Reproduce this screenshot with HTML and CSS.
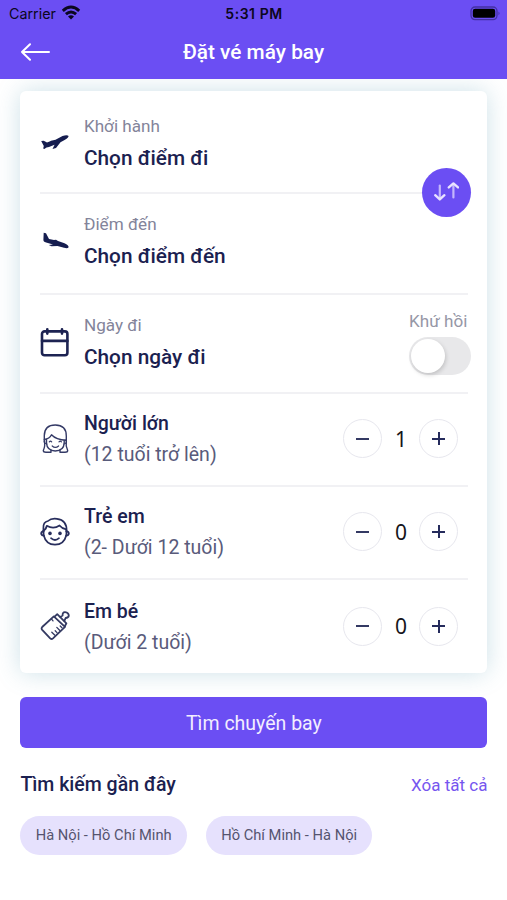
FILE: index.html
```html
<!DOCTYPE html>
<html lang="vi">
<head>
<meta charset="utf-8">
<title>Đặt vé máy bay</title>
<link rel="stylesheet" href="styles.css">
</head>
<body>
<header class="header">
  <div class="status">
    <div class="carrier"><span>Carrier</span>
      <svg width="20" height="15" viewBox="0 0 20 15" fill="none" stroke="#0b0720" stroke-width="2.9"><path d="M1.8 5.8Q10 -1.6 18.2 5.8"/><path d="M4.9 9.2Q10 4.6 15.1 9.2"/><path d="M7 11.6Q10 9 13 11.6L10 14.6Z" fill="#0b0720" stroke="none"/></svg>
    </div>
    <span class="time">5:31 PM</span>
    <svg class="battery" width="31" height="15" viewBox="0 0 31 15"><rect x="1" y="1" width="26" height="12.6" rx="4" fill="none" stroke="#4431a3" stroke-width="1.3"/><rect x="2.8" y="2.8" width="22.4" height="9" rx="2.3" fill="#000"/><path d="M28.5 5.5Q30.6 7.3 28.5 9.2Z" fill="#4431a3"/></svg>
  </div>
  <div class="nav">
    <svg width="30" height="18" viewBox="0 0 30 18" fill="none" stroke="#fff" stroke-width="2" stroke-linecap="round" stroke-linejoin="round"><path d="M2 9H29M10 1.2L2 9L10 16.8"/></svg>
    <h1>Đặt vé máy bay</h1>
  </div>
</header>
<main>
  <section class="card">
    <div class="row from">
      <svg class="icon" viewBox="0 0 30 30" fill="#151d4f"><path d="M1.2 14L3.7 13.7L7 15.6L10.2 14.3L11 13.8L15.5 12.8L22.5 8.9Q27.5 7.4 28.6 9.1Q28.6 10.8 25 12.8L20.5 15.2L16 21L12.5 22L14.6 17.8L9 20L6.5 20.6L4.3 22L3.2 21.6L3.8 19Z"/></svg>
      <div class="text"><span class="label">Khởi hành</span><span class="value">Chọn điểm đi</span></div>
      <button class="swap"><svg width="26" height="20" viewBox="0 0 26 20" fill="none" stroke="#e9e3ff" stroke-width="2.4" stroke-linecap="round" stroke-linejoin="round"><path d="M2.2 13.2L6.8 17.4L11.4 13.2"/><path d="M6.8 3.5V16" stroke-width="2.2" opacity=".7"/><path d="M15.8 5.4L20.4 1.4L25 5.4"/><path d="M20.4 2.5V15.5" stroke-width="2.2" opacity=".7"/></svg></button>
    </div>
    <div class="row to">
      <svg class="icon" viewBox="0 0 30 30" fill="#151d4f"><path d="M3.7 6.8L6 7.2L9 13.1L14 14L16 13.8L18 15L24.5 17.3Q28.8 19.3 28.6 21.3Q27.7 22.8 24 21.8L17.5 20.1L11.5 20.3L8.8 19.1L13 18.6L7 16.8Q3.4 16 3.4 14Z"/></svg>
      <div class="text"><span class="label">Điểm đến</span><span class="value">Chọn điểm đến</span></div>
    </div>
    <div class="row date">
      <svg class="icon" viewBox="0 0 30 30" fill="none" stroke="#1d2352" stroke-width="2.6" stroke-linecap="round"><rect x="2" y="4.4" width="25.4" height="23.8" rx="2.5"/><path d="M2 13.9H27.4M7.3 2.2V6.6M22 2.2V6.6"/></svg>
      <div class="text"><span class="label">Ngày đi</span><span class="value">Chọn ngày đi</span></div>
      <div class="round"><span>Khứ hồi</span><div class="toggle"><div class="knob"></div></div></div>
    </div>
    <div class="row pax adult">
      <svg class="icon" viewBox="0 0 30 30" fill="none" stroke="#343a66" stroke-width="1.4" stroke-linejoin="round" stroke-linecap="round"><path d="M3.3 26.5Q5.5 22 4.3 16V11.5Q4.5 1 15.3 1Q26.3 1 26.3 12V16.5Q25.5 22 27.7 26.5Q27.7 28.3 25 28.3H20V26M3.3 26.5Q3.3 28.3 6 28.3H11V26"/><path d="M4.3 15.5Q9.5 14.8 11.5 10.8Q16 15.8 26.3 16.2"/><path d="M6.5 15.5V19Q7 26.8 15.3 27Q23.8 26.8 24.2 19V16.5"/><path d="M4.6 16Q3 19 6.8 20M26 16Q27.6 19 24 20M12.2 22Q15.3 24.8 18.6 22M9.3 17.9Q10.5 16.5 11.7 17.9M19 17.9Q20.2 16.5 21.4 17.9" stroke-width="1.2"/></svg>
      <div class="text"><span class="name">Người lớn</span><span class="note">(12 tuổi trở lên)</span></div>
      <div class="stepper"><button class="minus"></button><span>1</span><button class="minus plus"></button></div>
    </div>
    <div class="row pax">
      <svg class="icon" viewBox="0 0 30 30" fill="none" stroke="#282e5d" stroke-width="1.7" stroke-linejoin="round" stroke-linecap="round"><path d="M3.4 14V11Q3 5 8 4Q11 1 17 1.8Q27 3 26.6 14"/><path d="M3.5 13.5Q6 12.5 6.8 8.8Q13.5 12.5 19.5 8.5Q21.8 11.5 26.3 12.3"/><path d="M3.6 13.5V18Q6 27.7 15 27.7Q24 27.7 26.4 18V13.5"/><path d="M3.6 14.2Q1 14.5 1.3 17Q2 18.8 3.8 18.6M26.4 14.2Q29 14.5 28.7 17Q28 18.8 26.2 18.6" stroke-width="2"/><path d="M11 21.2Q15 24.8 19 21.2"/><g fill="#282e5d" stroke="none"><circle cx="10" cy="16.4" r="1.8"/><circle cx="20" cy="16.4" r="1.8"/></g></svg>
      <div class="text"><span class="name">Trẻ em</span><span class="note">(2- Dưới 12 tuổi)</span></div>
      <div class="stepper"><button class="minus"></button><span>0</span><button class="minus plus"></button></div>
    </div>
    <div class="row pax baby">
      <svg class="icon" viewBox="0 0 30 30" fill="none" stroke="#343a62" stroke-width="1.8" stroke-linejoin="round" stroke-linecap="round"><path d="M13.8 5.4L2.2 16Q1 17.4 2.2 18.8L10.2 27.4Q11.6 28.6 13 27.4L25 15.8Z"/><path d="M14.6 5.6L17.2 3.2L26.4 12.3L24.8 15.2"/><path d="M20.3 6L22.6 4.6Q22.4 1 25 1.1Q28.8 1.6 28.8 4.8Q28.4 6.8 25.6 7L24.4 9.8"/><path d="M11.6 8.2L13 9.9M22 16.8L20.2 15M19.6 19.2L16.8 16.4M17 21.6L15.2 19.8M14.6 24L11.8 21.2" stroke-width="1.3"/></svg>
      <div class="text"><span class="name">Em bé</span><span class="note">(Dưới 2 tuổi)</span></div>
      <div class="stepper"><button class="minus"></button><span>0</span><button class="minus plus"></button></div>
    </div>
  </section>
  <button class="search">Tìm chuyến bay</button>
  <div class="recent"><h2>Tìm kiếm gần đây</h2><a>Xóa tất cả</a></div>
  <div class="chips"><span class="chip">Hà Nội - Hồ Chí Minh</span><span class="chip">Hồ Chí Minh - Hà Nội</span></div>
</main>
</body>
</html>
```
FILE: styles.css
```css
* { box-sizing: border-box; }
body { margin: 0; height: 900px; overflow: hidden; background: #fff; font-family: Roboto, sans-serif; color: #1b2150; }
button { border: 0; padding: 0; font-family: inherit; }
h1, h2 { margin: 0; font-weight: 500; }
.header { position: relative; z-index: 1; height: 79px; background: #6b4ef3; }
.status { display: grid; grid-template-columns: 1fr auto 1fr; align-items: center; height: 27px; padding: 0 6px 0 9px; font: 400 14.3px Inter, sans-serif; color: #0b0720; }
.carrier { display: flex; align-items: center; gap: 5px; }
.carrier svg { margin-top: -2px; }
.time { font-weight: 600; font-size: 14px; letter-spacing: .55px; margin-right: 2px; }
.battery { justify-self: end; }
.nav { display: grid; grid-template-columns: 30px 1fr 30px; align-items: center; height: 50px; padding: 0 20px; }
.nav h1 { text-align: center; font-size: 20.8px; line-height: 28px; color: #fff; }
main { padding: 12px 19.6px 0 20.4px; }
.card { width: 467px; height: 582px; padding: 0 19.4px 0 19.6px; background: #fff; border-radius: 6px; box-shadow: 0 0 24px rgba(70, 145, 170, .27); }
.row { position: relative; display: flex; align-items: center; height: 93px; border-bottom: 2px solid #f1f1f4; }
.pax .text { padding-top: 2px; }
.pax { padding-bottom: 2px; }
.from { height: 103px; }
.from .text { padding-top: 2px; }
.to { height: 101px; padding-bottom: 5px; }
.date { height: 99px; padding-bottom: 3px; }
.baby { border: 0; height: 94px; }
.icon { width: 30px; height: 30px; margin-right: 14px; flex: none; }
.text { display: flex; flex-direction: column; flex: 1; }
.label { font-size: 17.1px; line-height: 24px; color: #83849a; }
.value { font-size: 20.8px; line-height: 28px; margin-top: 6px; font-weight: 500; }
.name { font-size: 19.5px; line-height: 26px; font-weight: 500; }
.note { font-size: 19.5px; line-height: 26px; margin-top: 5px; color: #595b7b; }
.swap { position: absolute; right: -2.6px; bottom: -24.5px; z-index: 1; width: 49px; height: 49px; border-radius: 50%; background: #6b4ef3; display: grid; place-items: center; }
.round { display: flex; flex-direction: column; align-items: flex-end; margin-right: -3.4px; font-size: 17.1px; line-height: 24px; color: #9697a6; }
.round span { margin-right: 4px; }
.toggle { width: 62px; height: 38px; padding: 2px; margin-top: 4px; border-radius: 19px; background: #e8e8ea; }
.knob { width: 34px; height: 34px; border-radius: 50%; background: #fff; box-shadow: 1px 2px 4px rgba(0, 0, 0, .17); }
.stepper { display: flex; align-items: center; margin-right: 9.6px; }
.stepper span { width: 37px; text-align: center; font: 400 21px/28px "Noto Sans", sans-serif; color: #15151b; }
.minus { width: 39px; height: 39px; border: 1px solid #e7e7ee; border-radius: 50%; background: linear-gradient(#343963, #343963) center / 13px 2px no-repeat; }
.plus { background: linear-gradient(#252b5c, #252b5c) center / 13px 2px no-repeat, linear-gradient(#252b5c, #252b5c) center / 2px 13px no-repeat; }
.search { display: block; width: 467px; height: 51px; margin-top: 24.4px; padding-top: 1px; border-radius: 6px; background: #6b4ef3; color: #f2edff; font-size: 19.5px; }
.recent { display: flex; justify-content: space-between; align-items: center; height: 28px; margin: 22.6px 0 16.9px; }
.recent h2 { font-size: 19.5px; }
.recent a { font-size: 17px; color: #7656ef; }
.chips { display: flex; gap: 19px; }
.chip { display: grid; place-items: center; width: 166.5px; height: 39px; padding-bottom: 1px; border-radius: 20px; background: #e6e1fd; font-size: 14.7px; color: #55546f; }
```
